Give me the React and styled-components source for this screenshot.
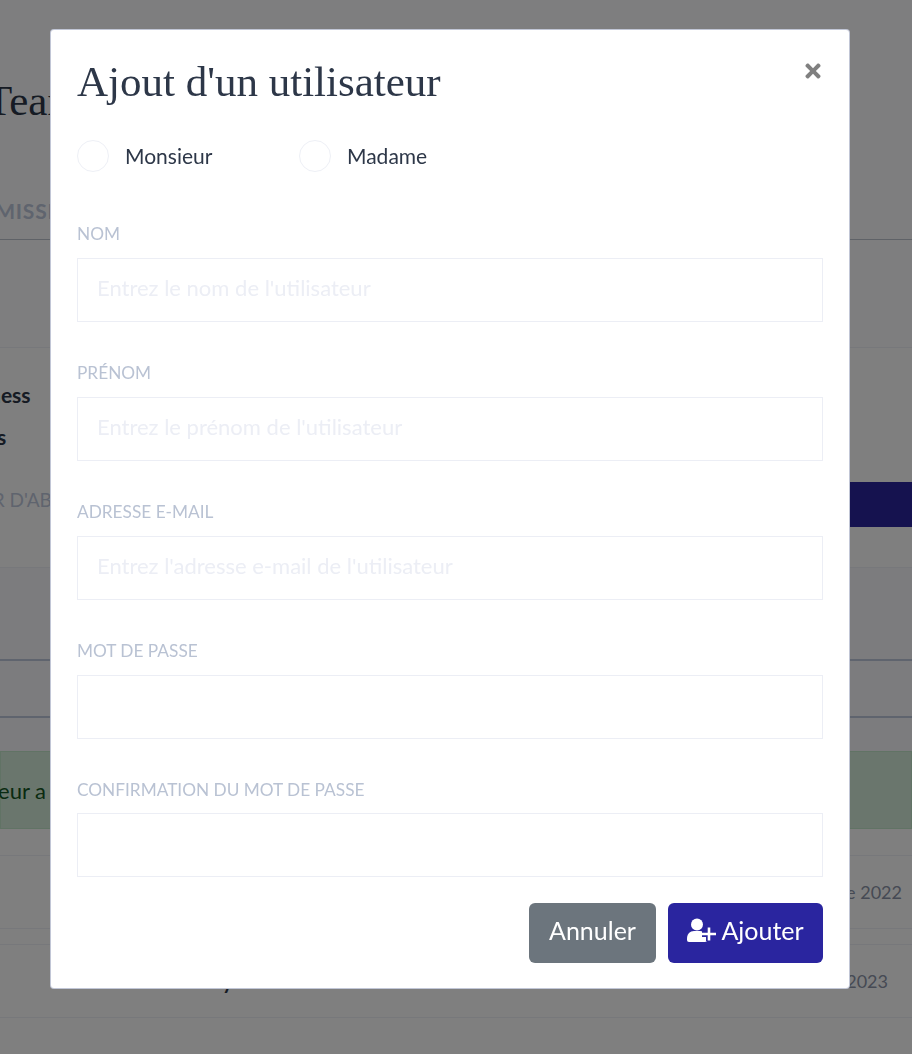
import React from "react";
import styled, { createGlobalStyle } from "styled-components";
import { FaTimes } from "react-icons/fa";

const GlobalStyle = createGlobalStyle`
    html, body {
        margin: 0;
        height: 100%;
        overflow: hidden;
        background: #fff;
    }
    * {
        box-sizing: border-box;
    }
`;

const sans = `"Lato", "Noto Sans", sans-serif`;
const serif = `"Liberation Serif", "DejaVu Serif", serif`;

/* page behind the modal */
const Page = styled.div`
    height: 1054px;
    overflow: hidden;
    font-family: ${sans};
    color: #2d3748;
    background: #fff;
`;

const Header = styled.div`
    height: 240px;
    padding-top: 76px;
    background: #fcfdff;
    border-bottom: 1px solid #bec4cf;
`;

const PageTitle = styled.h1`
    margin: 0 0 0 -14px;
    font-family: ${serif};
    font-weight: 400;
    font-size: 43px;
    line-height: 50px;
    color: #2d3748;
    white-space: nowrap;
`;

const Tab = styled.div`
    margin: 73px 0 0 -37px;
    font-size: 21px;
    font-weight: 700;
    letter-spacing: 0.8px;
    line-height: 24px;
    color: #bec8dc;
    white-space: nowrap;
`;

const Empty = styled.div`
    height: 108px;
    background: #fcfdff;
    border-bottom: 1px solid #eef0f6;
`;

const Plan = styled.div`
    position: relative;
    height: 220px;
    padding-top: 26px;
    background: #fff;
    border-bottom: 1px solid #eef0f6;
`;

const PlanName = styled.div`
    margin-left: ${(p) => p.$shift}px;
    font-size: 21px;
    font-weight: 700;
    line-height: 42px;
    color: #2d3748;
    white-space: nowrap;
`;

const PlanLabel = styled.div`
    margin: 30px 0 0 -55px;
    font-size: 19px;
    line-height: 24px;
    color: #bec8dc;
    white-space: nowrap;
`;

const PlanBar = styled.div`
    position: absolute;
    left: 400px;
    right: 0;
    top: 134px;
    height: 45px;
    background: #2a259f;
`;

const Tabs = styled.div`
    height: 183px;
    padding-top: 91px;
    background: #f8f9fd;
`;

const TabLine = styled.div`
    height: 59px;
    border-top: 2px solid #bec8dc;
    border-bottom: 2px solid #bec8dc;
`;

const Alert = styled.div`
    height: 78px;
    display: flex;
    align-items: center;
    font-size: 22px;
    color: #155724;
    background: #d4edda;
    border: 1px solid #c3e6cb;
    white-space: nowrap;
`;

const AlertText = styled.span`
    margin-left: -81px;
`;

const Row = styled.div`
    display: flex;
    justify-content: space-between;
    align-items: center;
    height: ${(p) => p.$height}px;
    padding-right: ${(p) => p.$pad}px;
    background: #fff;
    border-bottom: 1px solid #eef0f6;
`;

const RowName = styled.span`
    margin-left: ${(p) => p.$left}px;
    font-size: 20px;
    font-weight: 700;
    color: #2d3748;
`;

const RowDate = styled.span`
    font-size: 18px;
    color: #8c94a8;
`;

/* modal */
const Overlay = styled.div`
    position: fixed;
    inset: 0;
    display: flex;
    justify-content: center;
    align-items: flex-start;
    padding: 29px 12px 0 0;
    background: rgba(0, 0, 0, 0.5);
`;

const Modal = styled.form`
    position: relative;
    width: 800px;
    height: 960px;
    padding: 22px 26px 25px;
    background: #fff;
    border: 1px solid rgba(186, 192, 210, 0.9);
    border-radius: 4px;
    font-family: ${sans};
`;

const Close = styled.span`
    position: absolute;
    top: 30px;
    right: 25px;
    display: flex;
    font-size: 22px;
    color: #808080;
`;

const Title = styled.h2`
    margin: 0;
    font-family: ${serif};
    font-weight: 400;
    font-size: 43px;
    line-height: 60px;
    color: #2d3748;
`;

const Civility = styled.div`
    display: flex;
    margin-top: 28px;
    margin-bottom: 45px;
`;

const RadioLabel = styled.label`
    display: flex;
    align-items: center;
    gap: 16px;
    width: 222px;
    height: 32px;
    font-size: 21px;
    color: #2d3748;
`;

const RadioText = styled.span`
    margin-bottom: 2px;
`;

const Radio = styled.input.attrs({ type: "radio", name: "civility" })`
    appearance: none;
    width: 32px;
    height: 32px;
    margin: 0;
    background: #fff;
    border: 1px solid #eef0f6;
    border-radius: 50%;
`;

const Field = styled.div`
    height: ${(p) => p.$height || 139}px;
`;

const Label = styled.label`
    display: block;
    height: ${(p) => p.$height || 41}px;
    font-size: 17.25px;
    line-height: 34px;
    text-transform: uppercase;
    color: #b9c2d3;
    white-space: nowrap;
`;

const Input = styled.input`
    display: block;
    width: 100%;
    height: 64px;
    padding: 0 19px 5px;
    font-family: ${sans};
    font-size: 22px;
    color: #2d3748;
    background: #fff;
    border: 1px solid #eceef5;
    outline: none;

    &::placeholder {
        color: #eceef5;
        opacity: 1;
    }
`;

const Footer = styled.div`
    display: flex;
    justify-content: flex-end;
    gap: 12px;
    margin-top: 26px;
`;

const Button = styled.button`
    display: flex;
    align-items: center;
    justify-content: center;
    gap: 5px;
    width: ${(p) => p.$width}px;
    height: 60px;
    padding: 0 0 6px;
    font-family: ${sans};
    font-size: 25px;
    color: #fff;
    background: ${(p) => p.$bg};
    border: none;
    border-radius: 6px;
`;

// user with a plus, plus is cut out of the body
const UserPlusIcon = () => (
    <svg width="29" height="24" viewBox="0 0 29 24" fill="#fff">
        <circle cx="10" cy="6.5" r="6" />
        <path d="M0 20.5C0 16 3 13 7 13h6c4 0 7 3 7 7.5V22a2 2 0 0 1-2 2H2a2 2 0 0 1-2-2z" />
        <path d="M22 9v14M15 16h14" stroke="#2a259f" strokeWidth="6" />
        <path d="M22 9.5v13M15 16h14" stroke="#fff" strokeWidth="2.6" />
    </svg>
);

const App = () => {
    return (
        <>
            <GlobalStyle />
            <Page>
                <Header>
                    <PageTitle>Team</PageTitle>
                    <Tab>ADMISSIONS</Tab>
                </Header>
                <Empty />
                <Plan>
                    <PlanName $shift={-51}>Business</PlanName>
                    <PlanName $shift={-77}>Comptes</PlanName>
                    <PlanLabel>GÉRER D'ABONNEMENT</PlanLabel>
                    <PlanBar />
                </Plan>
                <Tabs>
                    <TabLine />
                </Tabs>
                <Alert>
                    <AlertText>L'utilisateur a bien été ajouté</AlertText>
                </Alert>
                <Row $height={27} />
                <Row $height={73} $pad={10}>
                    <span />
                    <RowDate>décembre 2022</RowDate>
                </Row>
                <Row $height={16} />
                <Row $height={73} $pad={24}>
                    <RowName $left={175}>Lemay</RowName>
                    <RowDate>mars 2023</RowDate>
                </Row>
            </Page>
            <Overlay>
                <Modal>
                    <Close><FaTimes /></Close>
                    <Title>Ajout d'un utilisateur</Title>
                    <Civility>
                        <RadioLabel><Radio /><RadioText>Monsieur</RadioText></RadioLabel>
                        <RadioLabel><Radio /><RadioText>Madame</RadioText></RadioLabel>
                    </Civility>
                    <Field>
                        <Label>Nom</Label>
                        <Input placeholder="Entrez le nom de l'utilisateur" />
                    </Field>
                    <Field>
                        <Label>Prénom</Label>
                        <Input placeholder="Entrez le prénom de l'utilisateur" />
                    </Field>
                    <Field>
                        <Label>Adresse e-mail</Label>
                        <Input placeholder="Entrez l'adresse e-mail de l'utilisateur" />
                    </Field>
                    <Field>
                        <Label>Mot de passe</Label>
                        <Input type="password" />
                    </Field>
                    <Field $height={104}>
                        <Label $height={40}>Confirmation du mot de passe</Label>
                        <Input type="password" />
                    </Field>
                    <Footer>
                        <Button type="button" $width={127} $bg="#6c757d">Annuler</Button>
                        <Button type="button" $width={155} $bg="#2a259f"><UserPlusIcon />Ajouter</Button>
                    </Footer>
                </Modal>
            </Overlay>
        </>
    );
};

export default App;
